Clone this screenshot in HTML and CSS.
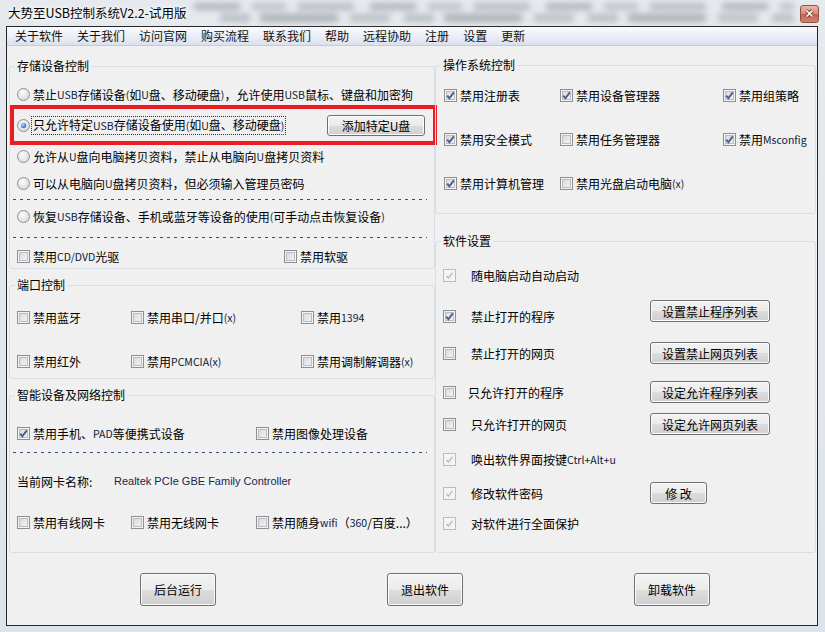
FILE: index.html
```html
<!DOCTYPE html>
<html>
<head>
<meta charset="utf-8">
<title>大势至USB控制系统V2.2-试用版</title>
<link rel="stylesheet" href="styles.css">
</head>
<body>
<div class="frame">
	<div class="titlebar">
		<span class="title">大势至USB控制系统V2.2-试用版</span>
		<div class="blur"></div>
		<div class="close">
			<svg width="17" height="16" viewBox="0 0 17 16"><path d="M5.5 4.5l6 6M11.5 4.5l-6 6" stroke="#7a3c30" stroke-width="3.4" fill="none"/><path d="M5.5 4.5l6 6M11.5 4.5l-6 6" stroke="#fff" stroke-width="1.7" fill="none"/></svg>
		</div>
	</div>
	<div class="client">
		<div class="menubar">
			<span>关于软件</span><span>关于我们</span><span>访问官网</span><span>购买流程</span><span>联系我们</span><span>帮助</span><span>远程协助</span><span>注册</span><span>设置</span><span>更新</span>
		</div>
		<div class="main">
			<div class="col">
				<!-- 存储设备控制 -->
				<fieldset class="grp storage">
					<legend>存储设备控制</legend>
					<div class="row first"><span class="rb"></span>禁止<span class="en">USB</span>存储设备<span class="en">(</span>如<span class="en">U</span>盘、移动硬盘<span class="en">)</span>，允许使用<span class="en">USB</span>鼠标、键盘和加密狗</div>
					<div class="row picked"><span class="rb on"></span><span class="focus">只允许特定<span class="en">USB</span>存储设备使用<span class="en">(</span>如<span class="en">U</span>盘、移动硬盘<span class="en">)</span></span><button class="btn add">添加特定U盘</button></div>
					<div class="row third"><span class="rb"></span>允许从<span class="en">U</span>盘向电脑拷贝资料，禁止从电脑向<span class="en">U</span>盘拷贝资料</div>
					<div class="row fourth"><span class="rb"></span>可以从电脑向<span class="en">U</span>盘拷贝资料，但必须输入管理员密码</div>
					<div class="dash d1"></div>
					<div class="row fifth"><span class="rb"></span>恢复<span class="en">USB</span>存储设备、手机或蓝牙等设备的使用<span class="en">(</span>可手动点击恢复设备<span class="en">)</span></div>
					<div class="dash d2"></div>
					<div class="row grid cdrom">
						<span class="opt"><span class="cb"></span>禁用<span class="en">CD/DVD</span>光驱</span>
						<span class="opt"><span class="cb"></span>禁用软驱</span>
					</div>
				</fieldset>

				<!-- 端口控制 -->
				<fieldset class="grp port">
					<legend>端口控制</legend>
					<div class="row grid p1">
						<span class="opt"><span class="cb"></span>禁用蓝牙</span>
						<span class="opt"><span class="cb"></span>禁用串口/并口<span class="en">(x)</span></span>
						<span class="opt"><span class="cb"></span>禁用<span class="en">1394</span></span>
					</div>
					<div class="row grid p2">
						<span class="opt"><span class="cb"></span>禁用红外</span>
						<span class="opt"><span class="cb"></span>禁用<span class="en">PCMCIA(x)</span></span>
						<span class="opt"><span class="cb"></span>禁用调制解调器<span class="en">(x)</span></span>
					</div>
				</fieldset>

				<!-- 智能设备及网络控制 -->
				<fieldset class="grp smart">
					<legend>智能设备及网络控制</legend>
					<div class="row grid s1">
						<span class="opt"><span class="cb on"><svg viewBox="0 0 11 11"><path d="M2.2 5.6L4.4 8.2 8.8 2.4" fill="none" stroke="#4a5f8f" stroke-width="1.9"/></svg></span>禁用手机、<span class="en">PAD</span>等便携式设备</span>
						<span class="opt"><span class="cb"></span>禁用图像处理设备</span>
					</div>
					<div class="dash d3"></div>
					<div class="row nic">
						<span class="nic-label">当前网卡名称:</span>
						<span class="nic-name">Realtek PCIe GBE Family Controller</span>
					</div>
					<div class="row grid s2">
						<span class="opt"><span class="cb"></span>禁用有线网卡</span>
						<span class="opt"><span class="cb"></span>禁用无线网卡</span>
						<span class="opt"><span class="cb"></span>禁用随身<span class="en">wifi</span>（<span class="en">360</span>/百度...）</span>
					</div>
				</fieldset>
			</div>

			<div class="col right">
				<!-- 操作系统控制 -->
				<fieldset class="grp system">
					<legend>操作系统控制</legend>
					<div class="row grid o1">
						<span class="opt"><span class="cb on"><svg viewBox="0 0 11 11"><path d="M2.2 5.6L4.4 8.2 8.8 2.4" fill="none" stroke="#4a5f8f" stroke-width="1.9"/></svg></span>禁用注册表</span>
						<span class="opt"><span class="cb on"><svg viewBox="0 0 11 11"><path d="M2.2 5.6L4.4 8.2 8.8 2.4" fill="none" stroke="#4a5f8f" stroke-width="1.9"/></svg></span>禁用设备管理器</span>
						<span class="opt"><span class="cb on"><svg viewBox="0 0 11 11"><path d="M2.2 5.6L4.4 8.2 8.8 2.4" fill="none" stroke="#4a5f8f" stroke-width="1.9"/></svg></span>禁用组策略</span>
					</div>
					<div class="row grid o2">
						<span class="opt"><span class="cb on"><svg viewBox="0 0 11 11"><path d="M2.2 5.6L4.4 8.2 8.8 2.4" fill="none" stroke="#4a5f8f" stroke-width="1.9"/></svg></span>禁用安全模式</span>
						<span class="opt"><span class="cb"></span>禁用任务管理器</span>
						<span class="opt"><span class="cb on"><svg viewBox="0 0 11 11"><path d="M2.2 5.6L4.4 8.2 8.8 2.4" fill="none" stroke="#4a5f8f" stroke-width="1.9"/></svg></span>禁用<span class="en">Msconfig</span></span>
					</div>
					<div class="row grid o2">
						<span class="opt"><span class="cb on"><svg viewBox="0 0 11 11"><path d="M2.2 5.6L4.4 8.2 8.8 2.4" fill="none" stroke="#4a5f8f" stroke-width="1.9"/></svg></span>禁用计算机管理</span>
						<span class="opt"><span class="cb"></span>禁用光盘启动电脑<span class="en">(x)</span></span>
					</div>
				</fieldset>

				<!-- 软件设置 -->
				<fieldset class="grp setting">
					<legend>软件设置</legend>
					<div class="set t1">
						<span class="opt wide"><span class="cb dis"><svg viewBox="0 0 11 11"><path d="M2.5 5.8L4.4 8 8.5 2.8" fill="none" stroke="#b4b4b4" stroke-width="1.2"/></svg></span>随电脑启动自动启动</span>
					</div>
					<div class="set t2">
						<span class="opt wide"><span class="cb on"><svg viewBox="0 0 11 11"><path d="M2.2 5.6L4.4 8.2 8.8 2.4" fill="none" stroke="#4a5f8f" stroke-width="1.9"/></svg></span>禁止打开的程序</span>
						<button class="btn list">设置禁止程序列表</button>
					</div>
					<div class="set t3">
						<span class="opt wide"><span class="cb"></span>禁止打开的网页</span>
						<button class="btn list">设置禁止网页列表</button>
					</div>
					<div class="set t4">
						<span class="opt wide narrow"><span class="cb"></span>只允许打开的程序</span>
						<button class="btn list">设定允许程序列表</button>
					</div>
					<div class="set t5">
						<span class="opt wide"><span class="cb"></span>只允许打开的网页</span>
						<button class="btn list">设定允许网页列表</button>
					</div>
					<div class="set t6">
						<span class="opt wide"><span class="cb dis"><svg viewBox="0 0 11 11"><path d="M2.5 5.8L4.4 8 8.5 2.8" fill="none" stroke="#b4b4b4" stroke-width="1.2"/></svg></span>唤出软件界面按键<span class="en">Ctrl+Alt+u</span></span>
					</div>
					<div class="set t7">
						<span class="opt wide"><span class="cb dis"><svg viewBox="0 0 11 11"><path d="M2.5 5.8L4.4 8 8.5 2.8" fill="none" stroke="#b4b4b4" stroke-width="1.2"/></svg></span>修改软件密码</span>
						<button class="btn edit">修 改</button>
					</div>
					<div class="set t8">
						<span class="opt wide"><span class="cb dis"><svg viewBox="0 0 11 11"><path d="M2.5 5.8L4.4 8 8.5 2.8" fill="none" stroke="#b4b4b4" stroke-width="1.2"/></svg></span>对软件进行全面保护</span>
					</div>
				</fieldset>
			</div>
		</div>
		<div class="actions">
			<button class="btn big">后台运行</button>
			<button class="btn big">退出软件</button>
			<button class="btn big">卸载软件</button>
		</div>
	</div>
</div>
</body>
</html>
```

FILE: styles.css
```css
html,body{
	margin:0;
	padding:0;
}
body{
	font-family:"Noto Sans CJK SC","Microsoft YaHei",sans-serif;
	font-size:12px;
	color:#000;
	background:#dfe5ec;
}
.frame{
	width:825px;
	height:632px;
	box-sizing:border-box;
	padding:0 7px 6px 6px;
	background:linear-gradient(#e6eaee,#dce3ea);
	overflow:hidden;
}

/* title bar */
.titlebar{
	height:26px;
	display:flex;
	align-items:flex-start;
}
.titlebar .title{
	padding:4px 0 0 2px;
	font-size:12.5px;
	line-height:18px;
	text-shadow:0 0 6px #fff,0 0 3px #fff;
	white-space:nowrap;
}
.titlebar .blur{
	flex:1;
	height:26px;
	margin:0 6px 0 8px;
	filter:blur(3px);
	opacity:.6;
	background:
		repeating-linear-gradient(90deg,#8c9298 0 46px,transparent 46px 58px,#a4a9ae 58px 92px,transparent 92px 104px,#979ca2 104px 160px,transparent 160px 176px) 0 3px/100% 7px no-repeat,
		repeating-linear-gradient(90deg,#9da2a7 0 30px,transparent 30px 40px,#858b91 40px 118px,transparent 118px 130px,#a0a5aa 130px 170px,transparent 170px 184px) 26px 14px/100% 8px no-repeat;
}
.titlebar .close{
	width:19px;
	height:18px;
	margin:5px -1px 0 0;
	box-sizing:border-box;
	border:1px solid #8a5449;
	border-radius:3px;
	background:linear-gradient(#eab7aa,#d98a76 48%,#c9604b 52%,#d4826c);
	display:grid;
	place-items:center;
}

/* client */
.client{
	height:600px;
	box-sizing:border-box;
	border:1px solid #262626;
	background:#f0f0f0;
}
.menubar{
	height:18px;
	line-height:18px;
	display:flex;
	padding-left:1px;
	border-bottom:1px solid #c3cbdc;
	background:linear-gradient(#fbfcfe,#e9edf6 55%,#d9e0ee);
	color:#111;
}
.menubar span{
	padding:0 7px;
}

.main{
	display:grid;
	grid-template-columns:426px 381px;
	padding:11px 1px 0 2px;
}
.col{
	display:flex;
	flex-direction:column;
	gap:8px;
}
.col.right{
	gap:19px;
}

/* group box */
.grp{
	margin:0;
	padding:0;
	min-width:0;
	box-sizing:border-box;
	border:1px solid #d5dfe5;
	border-radius:3px;
}
.grp legend{
	margin-left:5px;
	padding:0 2px;
	line-height:16px;
}
.storage{ height:211px; margin-top:1px; }
.port{ height:102px; }
.smart{ height:166px; }
.system{ height:157px; }
.setting{ height:320px; }

.row{
	display:flex;
	align-items:center;
	height:20px;
	padding-left:7px;
	white-space:nowrap;
}
.row.grid{
	display:grid;
}
.opt{
	display:inline-flex;
	align-items:center;
	white-space:nowrap;
}
.en{
	font-size:10.5px;
	color:#0c1a3a;
}

/* radio */
.rb{
	width:13px;
	height:13px;
	margin-right:3px;
	flex:none;
	box-sizing:border-box;
	border:1px solid #8e8f8f;
	border-radius:50%;
	background:radial-gradient(circle at 40% 35%,#fdfdfd,#e2e2e2 60%,#cfd0d1);
	display:inline-grid;
	place-items:center;
}
.rb.on::after{
	content:"";
	width:5px;
	height:5px;
	border-radius:50%;
	background:radial-gradient(circle at 35% 35%,#b9e0ff,#2d7fd6 60%,#14549e);
	box-shadow:0 0 1px #3a82d2;
}

/* checkbox */
.cb{
	width:13px;
	height:13px;
	margin-right:3px;
	flex:none;
	box-sizing:border-box;
	border:1px solid #8f8f8f;
	background:linear-gradient(135deg,#d2d5d9,#f7f7f7);
	box-shadow:inset 0 0 0 1px #f4f4f4,inset 0 0 0 2px #b9bdc2;
	display:inline-grid;
	place-items:center;
}
.cb svg{
	width:11px;
	height:11px;
}
.cb.dis{
	border-color:#bcbcbc;
	background:#f4f4f4;
	box-shadow:none;
}
.opt.wide .cb{
	margin-right:15px;
}
.opt.narrow .cb{
	margin-right:12px;
}

.dash{
	height:1px;
	margin:0 7px 0 3px;
	background:repeating-linear-gradient(90deg,#34507c 0 3px,transparent 3px 7px);
}

/* 存储设备控制 */
.storage .first{ margin-top:10px; }
.storage .picked{
	height:40px;
	margin:1px -3px 0 0;
	box-sizing:border-box;
	padding-left:3px;
	border:4px solid #ec1c24;
}
.picked .focus{
	outline:1px dotted #333;
	outline-offset:0;
	padding:0 1px;
	line-height:16px;
	margin-left:-1px;
}
.btn{
	font-family:inherit;
	font-size:12px;
	color:#000;
	padding:0;
	box-sizing:border-box;
	border:1px solid #707070;
	border-radius:3px;
	background:linear-gradient(#f2f2f2,#ebebeb 50%,#dddddd 51%,#cfcfcf);
	box-shadow:inset 0 0 0 1px #fbfbfb;
}
.btn.add{
	width:98px;
	height:21px;
	margin:0 8px 0 auto;
}
.storage .third{ margin-top:1px; }
.storage .fourth{ margin-top:7px; }
.storage .d1{ margin-top:6px; }
.storage .fifth{ margin-top:6px; }
.storage .d2{ margin-top:11px; }
.storage .cdrom{
	margin-top:8px;
	grid-template-columns:267px auto;
}

/* 端口控制 */
.port .row{ grid-template-columns:114px 170px auto; }
.port .p1{ margin-top:14px; }
.port .p2{ margin-top:24px; }

/* 智能设备及网络控制 */
.smart .s1{
	margin-top:20px;
	grid-template-columns:239px auto;
}
.smart .d3{ margin-top:9px; }
.smart .nic{ margin-top:18px; }
.nic-label{
	width:97px;
}
.nic-name{
	font-family:"Liberation Sans",Arial,sans-serif;
	font-size:11px;
	color:#1b2552;
}
.smart .s2{
	margin-top:21px;
	grid-template-columns:114px 125px auto;
}

/* 操作系统控制 */
.system .row{
	padding-left:8px;
	grid-template-columns:116px 163px auto;
}
.system .o1{ margin-top:12px; }
.system .o2{ margin-top:24px; }

/* 软件设置 */
.set{
	display:grid;
	grid-template-columns:207px auto;
	align-items:center;
	height:22px;
	padding-left:7px;
}
.set .btn{
	height:22px;
}
.btn.list{ width:120px; }
.btn.edit{ width:57px; }
.setting .t1{ margin-top:15px; }
.setting .t2{
	margin-top:14px;
	height:26px;
}
.setting .t2 .opt{
	align-self:end;
	margin-bottom:1px;
}
.setting .t2 .btn{
	align-self:start;
}
.setting .t3{ margin-top:16px; }
.setting .t4{ margin-top:17px; }
.setting .t5{ margin-top:10px; }
.setting .t6{ margin-top:13px; }
.setting .t7{ margin-top:12px; }
.setting .t8{ margin-top:8px; }

/* bottom buttons */
.actions{
	display:flex;
	gap:171px;
	margin-top:20px;
	padding-left:133px;
}
.btn.big{
	width:76px;
	height:33px;
}
```
